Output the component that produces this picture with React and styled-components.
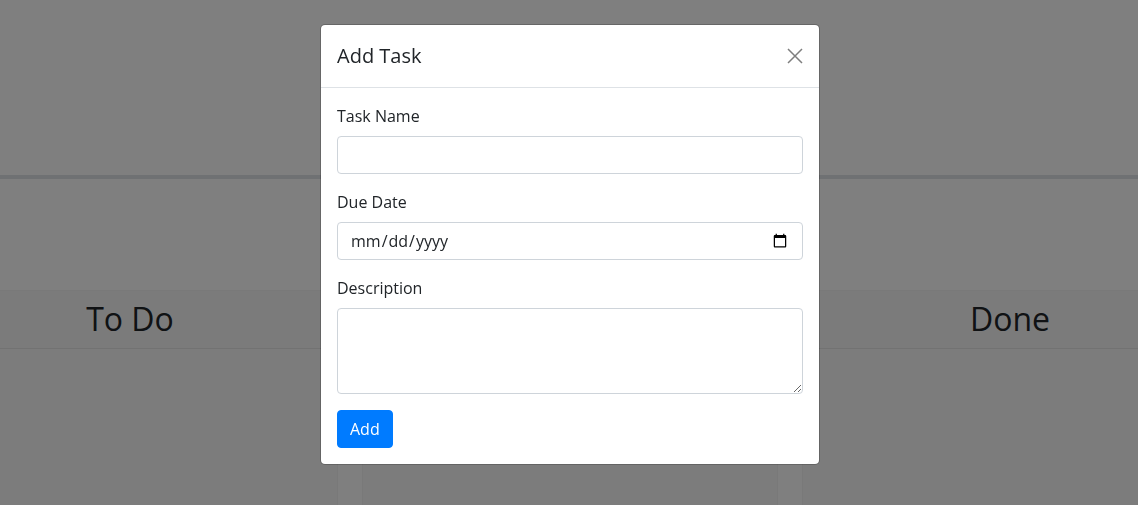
import React from "react";
import styled, { createGlobalStyle } from "styled-components";

const GlobalStyle = createGlobalStyle`
  * { box-sizing: border-box; }
  html, body { margin: 0; padding: 0; }
  body {
    font-family: "Open Sans", "Noto Sans", sans-serif;
    font-size: 16px;
    line-height: 1.5;
    color: #212529;
    background: #fff;
    overflow: hidden;
  }
`;

const Page = styled.div`
  min-height: 505px;
  display: flex;
  flex-direction: column;
  padding-left: 2px;
`;

const TopBar = styled.header`
  height: 179px;
  flex-shrink: 0;
  background: #fff;
  border-bottom: 4px solid #dee2e6;
  margin-left: -2px;
`;

const Board = styled.main`
  display: flex;
  justify-content: center;
  gap: 24px;
  padding-top: 111px;
  flex: 1;
`;

const Column = styled.section`
  width: 416px;
  flex-shrink: 0;
  min-height: 240px;
  background: #f9f9f9;
  border: 1px solid #f2f2f2;
  border-bottom: none;
`;

const ColumnTitle = styled.h2`
  margin: 0;
  padding: 9px 0 10px;
  font-size: 32px;
  font-weight: 400;
  line-height: 38px;
  text-align: center;
  color: #212529;
  background: #f7f7f7;
  border-bottom: 1px solid #e4e4e4;
`;

const Backdrop = styled.div`
  position: fixed;
  inset: 0;
  background: rgba(0, 0, 0, 0.5);
  display: flex;
  justify-content: center;
  align-items: flex-start;
  padding: 24px 0 0 2px;
`;

const Dialog = styled.div`
  width: 500px;
  background: #fff;
  border: 1px solid rgba(0, 0, 0, 0.2);
  border-radius: 5px;
  background-clip: padding-box;
  display: flex;
  flex-direction: column;
`;

const DialogHeader = styled.div`
  display: flex;
  align-items: center;
  justify-content: space-between;
  padding: 16px;
  border-bottom: 1px solid #dee2e6;
`;

const DialogTitle = styled.h5`
  margin: 0;
  font-size: 20px;
  font-weight: 400;
  line-height: 30px;
`;

const CloseButton = styled.button`
  width: 16px;
  height: 16px;
  padding: 0;
  border: 0;
  background: transparent;
  opacity: 0.5;
  display: flex;
  align-items: center;
  justify-content: center;
  cursor: pointer;
`;

const DialogBody = styled.form`
  padding: 16px;
  display: flex;
  flex-direction: column;
  align-items: flex-start;
`;

const Field = styled.div`
  width: 100%;
  margin-bottom: 16px;
`;

const Label = styled.label`
  display: inline-block;
  margin-bottom: 8px;
  font-size: 16px;
  line-height: 24px;
`;

const TextInput = styled.input`
  display: block;
  width: 100%;
  height: 38px;
  padding: 6px 12px;
  font-family: "Open Sans", "Noto Sans", sans-serif;
  font-size: 16px;
  line-height: 24px;
  color: #212529;
  background: #fff;
  border: 1px solid #ced4da;
  border-radius: 4px;
  outline: none;
`;

const TextArea = styled.textarea`
  display: block;
  width: 100%;
  height: 86px;
  padding: 6px 12px;
  font-family: "Open Sans", "Noto Sans", sans-serif;
  font-size: 16px;
  line-height: 24px;
  color: #212529;
  background: #fff;
  border: 1px solid #ced4da;
  border-radius: 4px;
  outline: none;
  resize: vertical;
`;

const PrimaryButton = styled.button`
  height: 38px;
  padding: 6px 12px;
  font-family: "Open Sans", "Noto Sans", sans-serif;
  font-size: 16px;
  line-height: 24px;
  color: #fff;
  background: #007bff;
  border: 1px solid #007bff;
  border-radius: 4px;
  cursor: pointer;
`;

const CloseIcon = () => (
  <svg width="16" height="16" viewBox="0 0 16 16" aria-hidden="true">
    <path d="M1 1 L15 15 M15 1 L1 15" stroke="#000" strokeWidth="1.5" fill="none" />
  </svg>
);

const columns = ["To Do", "In Progress", "Done"];

export default function App() {
  return (
    <>
      <GlobalStyle />
      <Page>
        <TopBar />
        <Board>
          {columns.map((c) => (
            <Column key={c}>
              <ColumnTitle>{c}</ColumnTitle>
            </Column>
          ))}
        </Board>
      </Page>
      <Backdrop>
        <Dialog role="dialog" aria-modal="true">
          <DialogHeader>
            <DialogTitle>Add Task</DialogTitle>
            <CloseButton type="button" aria-label="Close">
              <CloseIcon />
            </CloseButton>
          </DialogHeader>
          <DialogBody onSubmit={(e) => e.preventDefault()}>
            <Field>
              <Label htmlFor="task-name">Task Name</Label>
              <TextInput id="task-name" type="text" />
            </Field>
            <Field>
              <Label htmlFor="due-date">Due Date</Label>
              <TextInput id="due-date" type="date" />
            </Field>
            <Field>
              <Label htmlFor="description">Description</Label>
              <TextArea id="description" rows={3} />
            </Field>
            <PrimaryButton type="submit">Add</PrimaryButton>
          </DialogBody>
        </Dialog>
      </Backdrop>
    </>
  );
}
